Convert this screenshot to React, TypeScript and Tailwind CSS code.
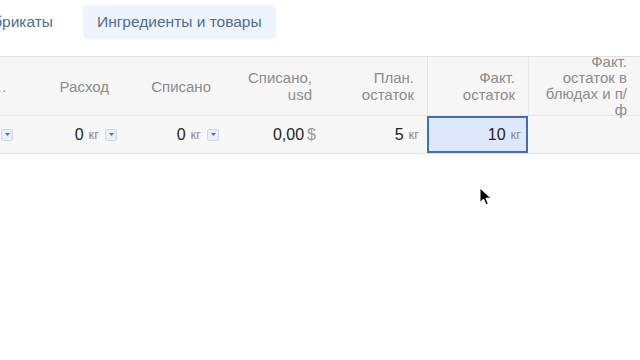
import React from "react";

type Col = { w: string; title: React.ReactNode };

const cols: Col[] = [
  { w: "w-[20px]", title: "…" },
  { w: "w-[102px]", title: "Расход" },
  { w: "w-[102px]", title: "Списано" },
  { w: "w-[101px]", title: <>Списано,<br />usd</> },
  { w: "w-[102px]", title: <>План.<br />остаток</> },
  { w: "w-[101px]", title: <>Факт.<br />остаток</> },
  { w: "w-[112px]", title: <>Факт.<br />остаток в<br />блюдах и п/<br />ф</> },
];

function DropBtn() {
  return (
    <span className="ml-[6px] inline-flex h-[12px] w-[12px] items-center justify-center rounded-[2px] border border-[#cdd9ea] bg-[#e6eef9]">
      <svg width="5" height="3" viewBox="0 0 5 3">
        <path d="M0 0h5L2.5 3z" fill="#5a6f8a" />
      </svg>
    </span>
  );
}

function Qty({ v, drop }: { v: string; drop?: boolean }) {
  return (
    <span className="flex items-center">
      <span className="text-[16px] text-[#222]">{v}</span>
      <span className="ml-[5px] text-[13px] text-[#8a8a8a]">кг</span>
      {drop && <DropBtn />}
    </span>
  );
}

function Cursor() {
  return (
    <svg className="absolute left-[479px] top-[187px]" width="13" height="19" viewBox="0 0 13 19">
      <path
        d="M1 1v14.5l3.6-3.4 2.4 5.6 2.3-1-2.4-5.5h5.1z"
        fill="#000"
        stroke="#fff"
        strokeWidth="1"
        strokeLinejoin="round"
      />
    </svg>
  );
}

export default function App() {
  return (
    <div className="relative h-[360px] w-[640px] overflow-hidden bg-white font-['Liberation_Sans',Arial,sans-serif]">
      {/* Tabs */}
      <div className="flex h-[56px] items-start pt-[5px]">
        <div className="flex h-[34px] w-[53px] items-center justify-end overflow-hidden">
          <span className="shrink-0 whitespace-nowrap text-[15.5px] text-[#4f6e8e]">Полуфабрикаты</span>
        </div>
        <div className="ml-[30px] flex h-[34px] items-center rounded-[5px] bg-[#eef4fc] px-[14px]">
          <span className="whitespace-nowrap text-[15.5px] text-[#4f6e8e]">Ингредиенты и товары</span>
        </div>
      </div>

      {/* Table */}
      <div className="border-t border-[#e2e2e2]">
        <div className="flex h-[59px] border-b border-[#e6e6e6] bg-[#f6f6f6]">
          {cols.map((c, i) => (
            <div
              key={i}
              className={`${c.w} flex shrink-0 items-center justify-end pr-[13px] text-right text-[15px] text-[#8c8c8c] ${
                i === 5 || i === 6 ? "border-l border-[#e6e6e6]" : ""
              } ${i === 6 ? "leading-[16px]" : "leading-[17px]"}`}
            >
              <span className="whitespace-nowrap">{c.title}</span>
            </div>
          ))}
        </div>
        <div className="flex h-[38px] border-b border-[#e2e2e2] bg-[#f7f7f7]">
          <div className="flex w-[20px] shrink-0 items-center justify-end pr-[7px]">
            <span className="-ml-[6px] flex"><DropBtn /></span>
          </div>
          <div className="flex w-[102px] shrink-0 items-center justify-end pr-[5px]">
            <Qty v="0" drop />
          </div>
          <div className="flex w-[102px] shrink-0 items-center justify-end pr-[5px]">
            <Qty v="0" drop />
          </div>
          <div className="flex w-[101px] shrink-0 items-center justify-end pr-[9px]">
            <span className="text-[16px] text-[#222]">0,00</span>
            <span className="ml-[3px] text-[16px] text-[#9a9a9a]">$</span>
          </div>
          <div className="flex w-[102px] shrink-0 items-center justify-end pr-[8px]">
            <Qty v="5" />
          </div>
          <div className="flex w-[101px] shrink-0 items-center justify-end border-2 border-[#3f72b5] bg-[#dde9fb] pr-[5px]">
            <Qty v="10" />
          </div>
          <div className="w-[112px] shrink-0" />
        </div>
      </div>

      <Cursor />
    </div>
  );
}
